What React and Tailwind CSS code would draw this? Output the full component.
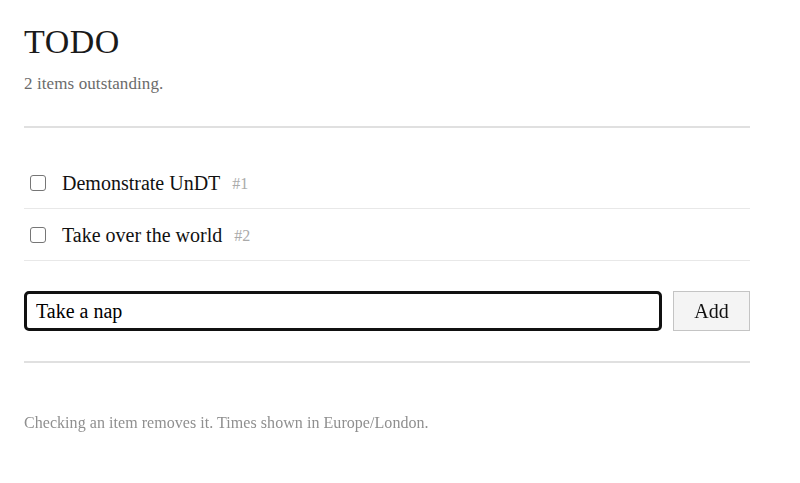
import { useState } from 'react'

const serif = "font-['Liberation_Serif',serif]"

export default function App() {
  const [items, setItems] = useState([
    { id: 1, text: 'Demonstrate UnDT' },
    { id: 2, text: 'Take over the world' },
  ])
  const [draft, setDraft] = useState('Take a nap')

  function add(e) {
    e.preventDefault()
    if (!draft.trim()) return
    const id = items.length ? items[items.length - 1].id + 1 : 1
    setItems([...items, { id, text: draft }])
    setDraft('')
  }

  return (
    <div className={`min-h-screen bg-white ${serif}`}>
      <div className="w-[726px] ml-6 pt-[22px]">
        <h1 className="text-[34px] leading-[40px] tracking-[0.5px] text-[#1a1a1a]">TODO</h1>
        <p className="mt-[10px] text-[17px] leading-[24px] tracking-[0.1px] text-[#6b6b6b]">
          {items.length} items outstanding.
        </p>

        <hr className="mt-[30px] border-t-2 border-[#e0e0e0]" />

        <ul className="mt-[29px]">
          {items.map(item => (
            <li key={item.id} className="flex items-center h-[52px] border-b border-[#e8e8e8]">
              <input
                type="checkbox"
                className="w-4 h-4 ml-[6px] appearance-none rounded-[3px] border-[1.5px] border-[#767676] bg-white"
                onChange={() => setItems(items.filter(i => i.id !== item.id))}
              />
              <span className="ml-4 text-[20px] text-[#111]">{item.text}</span>
              <span className="ml-3 text-[16px] text-[#aaa] mt-[3px]">#{item.id}</span>
            </li>
          ))}
        </ul>

        <form onSubmit={add} className="flex gap-[11px] mt-[30px]">
          <input
            autoFocus
            value={draft}
            onChange={e => setDraft(e.target.value)}
            className={`flex-1 h-10 px-[9px] text-[20px] text-black border-[3px] border-[#111] rounded-[5px] outline-none ${serif}`}
          />
          <button className={`w-[77px] h-10 text-[20px] text-[#111] bg-[#f4f4f4] border border-[#c4c4c4] ${serif}`}>
            Add
          </button>
        </form>

        <hr className="mt-[30px] border-t-2 border-[#e0e0e0]" />

        <p className="mt-[48px] text-[16px] tracking-[0.05px] text-[#8f8f8f]">
          Checking an item removes it. Times shown in Europe/London.
        </p>
      </div>
    </div>
  )
}
